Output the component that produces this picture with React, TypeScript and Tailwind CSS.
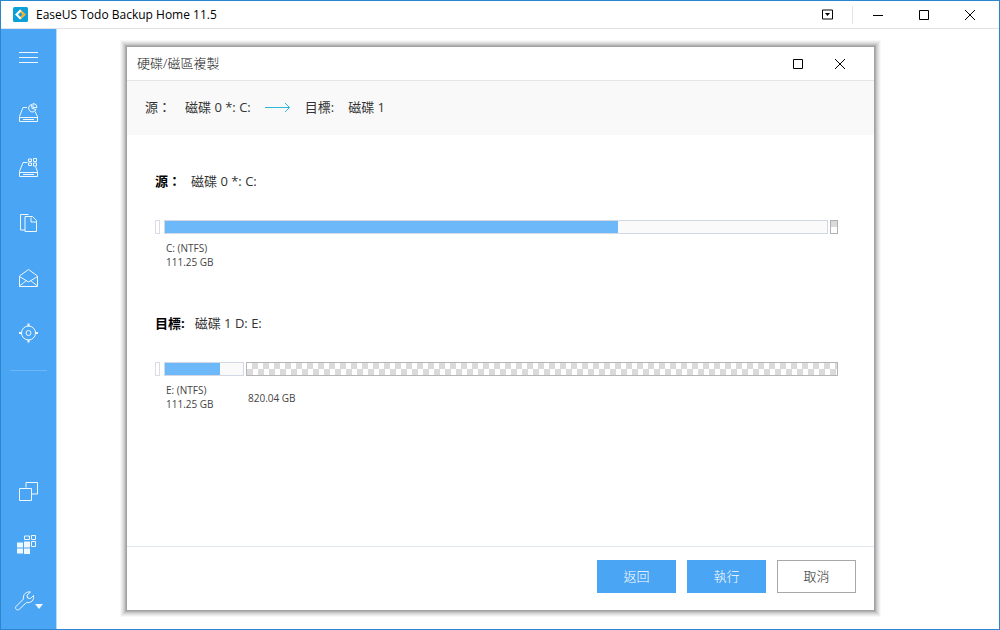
import type { ReactNode } from 'react'

const Icon = ({ children, size = 20 }: { children: ReactNode; size?: number }) => (
  <svg
    width={size}
    height={size}
    viewBox={`0 0 ${size} ${size}`}
    fill="none"
    stroke="currentColor"
    className="shrink-0 overflow-visible"
    aria-hidden="true"
  >
    {children}
  </svg>
)

const topItems = [
  { label: 'Menu', icon: <path d="M0 4.500h19M0 9.500h19M0 14.500h19" /> },
  {
    label: 'Disk backup',
    icon: (
      <>
        <path d="M8 4.500H4L.5 13.500v5h18v-5L16 8.500M.5 14.500h18M4 16.500h11" />
        <path d="M12.500 1.500a3.800 3.800 0 1 0 4.500 5l-4-1zM14 .5v4h4A4 4 0 0 0 14 .5z" />
      </>
    ),
  },
  {
    label: 'System backup',
    icon: (
      <>
        <path d="M8.500 4.500H4L.5 13.500v5h18v-5L16.500 8.500M.5 14.500h18M4 16.500h11" />
        <path d="M9.500 1h3v2.500h-3zM14.500.5h3v3h-3zM9.500 5h3v2.500h-3zM14.500 5h3v3h-3z" />
      </>
    ),
  },
  {
    label: 'File backup',
    icon: <path d="M9.500 1.500h-8v15.500h4.500M6 3.500h7.500l4 4v11H6zM12 4.500v4.500h5.500" />,
  },
  {
    label: 'Mail backup',
    icon: (
      <path d="M.5 8l9-6.500 9 6.500v10.500H.5zM.5 8.500l9 5.500 9-5.500M.5 18l7-5.500M18.500 18l-7-5.500" />
    ),
  },
  {
    label: 'Smart backup',
    icon: (
      <>
        <circle cx="9.500" cy="10" r="7" />
        <circle cx="9.500" cy="10" r="2.500" />
        <path strokeWidth="2" d="M9.500 .5v3M9.500 16.500v3M0 10h3M16 10h3" />
      </>
    ),
  },
]

const bottomItems = [
  { label: 'Clone', icon: <path d="M7 5.500V.5h11.500V12H13M.5 6.500h12V18.500H.5z" /> },
  {
    label: 'System clone',
    icon: (
      <g transform="translate(-2 -2)">
        <path d="M7.500 1h5v3.500h-5zM14.500.5h4v4h-4zM14.500 6.500h4v5h-4z" />
        <path fill="currentColor" stroke="none" d="M0 7.500h6v5H0zM7 6.500h6v6H7zM0 13.500h6v5H0zM7 13.500h6V19H7z" />
      </g>
    ),
  },
]

const MaximizeIcon = () => (
  <Icon size={10}>
    <path d="M.5.5h9v9h-9z" />
  </Icon>
)

const CloseIcon = () => (
  <Icon size={10}>
    <path d="M0 0l10 10M10 0L0 10" />
  </Icon>
)

const NavButton = ({ label, children }: { label: string; children: ReactNode }) => (
  <button type="button" aria-label={label} className="flex h-[55px] w-full items-center justify-center">
    {children}
  </button>
)

const TitleBar = () => (
  <header className="flex h-7 shrink-0 items-center border-b border-[#e2e2e4] pl-3 pr-1.5">
    <svg width="15" height="15" viewBox="0 0 15 15" aria-hidden="true">
      <rect width="15" height="15" rx="1.500" fill="#0d9fd8" />
      <path d="M7.500 2.500l5.500 5-5.500 5L6 11l3.500-3.500L6 4z" fill="#f5b335" />
      <path d="M7 2.500L8.500 4 5 7.500 8.500 11 7 12.500l-5-5z" fill="#fff" />
    </svg>
    <h1 className="ml-2 flex-1 text-[12px] text-black">EaseUS Todo Backup Home 11.5</h1>
    <button type="button" aria-label="Options" className="flex h-7 w-[46px] items-center justify-center">
      <Icon size={11}>
        <path d="M.5 1h10v9H.5z" />
        <path d="M3 4h5L5.500 7z" fill="currentColor" stroke="none" />
      </Icon>
    </button>
    <div className="mx-0.5 h-[18px] w-px bg-[#e2e4ea]" />
    <button type="button" aria-label="Minimize" className="flex h-7 w-[46px] items-center justify-center">
      <Icon size={10}>
        <path d="M0 5.500h10" />
      </Icon>
    </button>
    <button type="button" aria-label="Maximize" className="flex h-7 w-[46px] items-center justify-center">
      <MaximizeIcon />
    </button>
    <button type="button" aria-label="Close" className="flex h-7 w-[46px] items-center justify-center">
      <CloseIcon />
    </button>
  </header>
)

const Sidebar = () => (
  <nav className="flex w-14 shrink-0 flex-col border-r border-[#b5dafb] bg-[#4aa5f5] text-[#f0f8ff]">
    <div className="h-px" />
    {topItems.map(item => (
      <NavButton key={item.label} label={item.label}>
        <Icon>{item.icon}</Icon>
      </NavButton>
    ))}
    <div className="mx-[9px] mt-2.5 h-px bg-[#6db7f8]" />

    <div className="mt-auto">
      {bottomItems.map(item => (
        <NavButton key={item.label} label={item.label}>
          <Icon>{item.icon}</Icon>
        </NavButton>
      ))}
      <NavButton label="Tools">
        <Icon>
          <path d="M15.500 0C11.500-.8 7.500 2.500 8.500 7L1 14.500c-1.500 2 1 4.500 3 3L11.500 10.500C16 11.500 19.500 8 18.500 3.500L15.500 6.500l-3-.5-.5-3z" />
        </Icon>
        <svg width="8" height="20" viewBox="0 0 8 20" aria-hidden="true">
          <path d="M0 12h8l-4 5z" fill="currentColor" />
        </svg>
      </NavButton>
    </div>
  </nav>
)

// reserved space in front of the first partition
const Sliver = () => <div className="mr-0.5 h-3.5 w-[5px] shrink-0 border border-[#d9dbe6] bg-white" />

const Partition = ({ name, size, used, className }: { name: string; size: string; used: number; className: string }) => (
  <div className={className}>
    <div className="h-3.5 border border-[#d3d8e6] bg-[#fafafa]">
      <div className="h-full bg-[#6cb8f8]" style={{ width: `${used}%` }} />
    </div>
    <p className="mt-[7px] pl-0.5 text-[10px] leading-[14px] whitespace-nowrap text-[#444]">
      {name}
      <br />
      {size}
    </p>
  </div>
)

const DiskHeading = ({ label, value }: { label: string; value: string }) => (
  <div className="flex h-5 items-center text-[13px]">
    <h3 className="font-bold text-black">{label}</h3>
    <p className="ml-2.5 text-[#333]">{value}</p>
  </div>
)

const CloneDialog = () => (
  <section
    role="dialog"
    aria-labelledby="dialog-title"
    className="flex flex-1 flex-col bg-white shadow-[0_0_0_1px_#a2a2a2,0_0_0_2px_#b0b0b0,0_0_0_3px_#c6c6c6,0_0_0_4px_#d6d6d6,0_0_0_5px_#e2e2e2,0_0_0_6px_#eeeeee,0_0_0_7px_#f8f8f8]"
  >
    <header className="flex h-[34px] shrink-0 items-center border-b border-[#e6e6e8] pl-2.5 pr-[13px]">
      <h2 id="dialog-title" className="flex-1 text-[13px] font-light text-[#222]">硬碟/磁區複製</h2>
      <button type="button" aria-label="Maximize" className="flex h-8 w-[42px] items-center justify-center">
        <MaximizeIcon />
      </button>
      <button type="button" aria-label="Close" className="flex h-8 w-[42px] items-center justify-center">
        <CloseIcon />
      </button>
    </header>

    <div className="flex h-[54px] shrink-0 items-center bg-[#f9f9f9] pl-[18px] text-[13px] text-[#333]">
      <span>源：</span>
      <span className="ml-3.5">磁碟 0 *: C:</span>
      <svg width="26" height="10" viewBox="0 0 26 10" fill="none" stroke="#2db8d8" className="mx-3.5" aria-hidden="true">
        <path d="M0 4.500h24.500M20 0l4.500 4.500L20 9" />
      </svg>
      <span>目標:</span>
      <span className="ml-3.5">磁碟 1</span>
    </div>

    <div className="flex-1 pl-7 pr-9 pt-[37px]">
      <DiskHeading label="源：" value="磁碟 0 *: C:" />
      <div className="mt-7 flex gap-0.5">
        <Sliver />
        <Partition name="C: (NTFS)" size="111.25 GB" used={68.5} className="flex-1" />
        <div className="h-3.5 w-2 shrink-0 border border-[#b0b0b0] bg-white">
          <div className="h-1/2 bg-[#dadada]" />
        </div>
      </div>

      <div className="mt-[45px]">
        <DiskHeading label="目標:" value="磁碟 1 D: E:" />
      </div>
      <div className="mt-7 flex gap-0.5">
        <Sliver />
        <Partition name="E: (NTFS)" size="111.25 GB" used={70} className="w-20 shrink-0" />
        <div className="flex-1">
          <div className="h-3.5 border border-[#b5b5b5] bg-[repeating-conic-gradient(#dadada_0_25%,#fff_0_50%)] bg-[length:11px_12px]" />
          <p className="mt-2 flex h-7 items-center pl-0.5 text-[10px] text-[#444]">820.04 GB</p>
        </div>
      </div>
    </div>

    <footer className="flex h-16 shrink-0 justify-end gap-[11px] border-t border-[#dfe6ed] pr-[18px] pt-[13px] text-[13px] font-light">
      <button type="button" className="h-[33px] w-[79px] bg-[#4aa5f5] text-white">返回</button>
      <button type="button" className="h-[33px] w-[79px] bg-[#4aa5f5] text-white">執行</button>
      <button type="button" className="h-[33px] w-[79px] border border-[#a8a8a8] bg-white text-[#222]">取消</button>
    </footer>
  </section>
)

const App = () => {
  return (
    <div className="flex min-h-screen flex-col border border-[#2b86d0] bg-white font-['Open_Sans','Noto_Sans_CJK_TC',sans-serif]">
      <TitleBar />
      <div className="flex flex-1">
        <Sidebar />
        <main className="flex flex-1 pb-[19px] pl-[70px] pr-[125px] pt-[18px]">
          <CloneDialog />
        </main>
      </div>
    </div>
  )
}

export default App
